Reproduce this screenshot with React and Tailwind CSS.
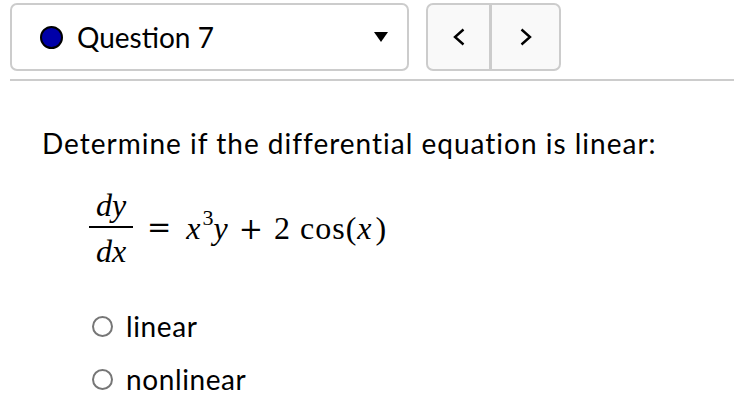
import React from "react";

const sans = { fontFamily: "Lato, 'Open Sans', sans-serif" };
const serif = { fontFamily: "'Liberation Serif', 'DejaVu Serif', serif" };
const op = { fontFamily: "'DejaVu Serif', 'Liberation Serif', serif" };

function Radio({ label }) {
  return (
    <label className="flex items-center gap-[13px] h-[26px]">
      <span className="w-[21px] h-[21px] rounded-full border-2 border-[#767676] bg-white shrink-0" />
      <span className="text-[28px] leading-none tracking-[0.6px] text-black">{label}</span>
    </label>
  );
}

function Fraction({ top, bottom }) {
  return (
    <span className="inline-flex flex-col items-center">
      <span className="leading-none pb-[5px]">{top}</span>
      <span className="block h-[2px] w-[44px] bg-black" />
      <span className="leading-none pt-[7px]">{bottom}</span>
    </span>
  );
}

export default function App() {
  return (
    <div className="bg-white w-[734px] h-[420px] overflow-hidden" style={sans}>
      {/* header: question select + nav */}
      <div className="flex items-start gap-[17px] pl-[10px] pt-[3px]">
        <div className="w-[399px] h-[68px] border-2 border-[#cccccc] rounded-[7px] flex items-center pl-[28px] pr-[19px]">
          <span className="w-[23px] h-[23px] rounded-full bg-[#0000a8] border-2 border-black shrink-0" />
          <span className="ml-[14px] text-[28px] leading-none text-black">Question 7</span>
          <svg className="ml-auto" width="14" height="10" viewBox="0 0 14 10">
            <polygon points="0,0 14,0 7,10" fill="#000" />
          </svg>
        </div>
        <div className="w-[135px] h-[68px] border-2 border-[#cccccc] rounded-[7px] bg-[#f9f9f9] flex">
          <button className="w-[64px] h-full flex items-center justify-center border-r-[3px] border-[#cccccc]">
            <svg width="12" height="18" viewBox="0 0 12 18">
              <polyline points="10.5,1.5 2,9 10.5,16.5" fill="none" stroke="#000" strokeWidth="2.4" />
            </svg>
          </button>
          <button className="flex-1 h-full flex items-center justify-center">
            <svg width="12" height="18" viewBox="0 0 12 18">
              <polyline points="1.5,1.5 10,9 1.5,16.5" fill="none" stroke="#000" strokeWidth="2.4" />
            </svg>
          </button>
        </div>
      </div>

      <div className="ml-[10px] mt-[8px] h-[2px] bg-[#cccccc]" />

      {/* question body */}
      <div className="pl-[42px] pt-[48px]">
        <p className="text-[28px] leading-none tracking-[1px] text-black">
          Determine if the differential equation is linear:
        </p>

        <div className="flex items-center pl-[47px] mt-[32px] text-[32px] text-black" style={serif}>
          <Fraction top={<i>dy</i>} bottom={<i>dx</i>} />
          <span className="ml-[14px] text-[29px]" style={op}>=</span>
          <span className="ml-[15px] whitespace-nowrap">
            <i>x</i>
            <sup className="text-[22px] relative -top-[14px] ml-[2px]">3</sup>
            <i>y</i>
            <span className="mx-[11px] text-[29px]" style={op}>+</span>2
            <span className="ml-[10px] tracking-[1px]">cos(</span>
            <i className="pr-[4px]">x</i>)
          </span>
        </div>

        <div className="flex flex-col gap-[27px] pl-[50px] mt-[46px]">
          <Radio label="linear" />
          <Radio label="nonlinear" />
        </div>
      </div>
    </div>
  );
}
